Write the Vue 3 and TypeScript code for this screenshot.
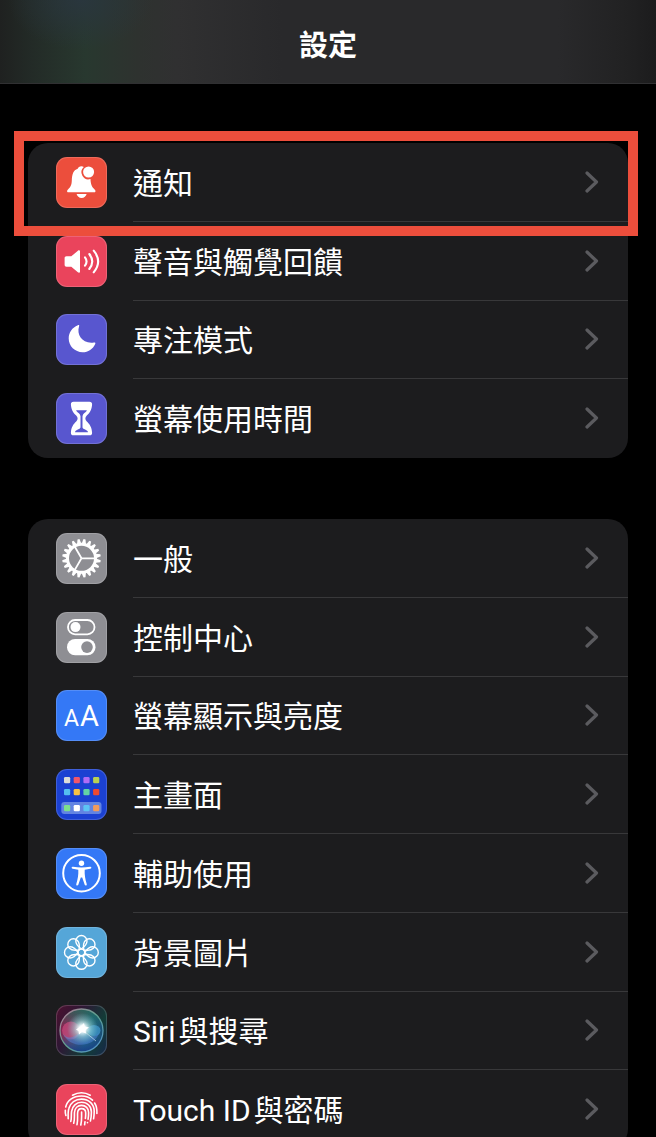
<script setup lang="ts">
type IconName =
  | 'bell' | 'sound' | 'moon' | 'hourglass' | 'gear' | 'toggles'
  | 'display' | 'home' | 'access' | 'wallpaper' | 'siri' | 'touch'

interface Row {
  id: string
  icon: IconName
  latin?: string
  label: string
  marked?: boolean
}

const groups: Row[][] = [
  [
    { id: 'notifications', icon: 'bell', label: '通知', marked: true },
    { id: 'sounds', icon: 'sound', label: '聲音與觸覺回饋' },
    { id: 'focus', icon: 'moon', label: '專注模式' },
    { id: 'screen-time', icon: 'hourglass', label: '螢幕使用時間' },
  ],
  [
    { id: 'general', icon: 'gear', label: '一般' },
    { id: 'control-center', icon: 'toggles', label: '控制中心' },
    { id: 'display', icon: 'display', label: '螢幕顯示與亮度' },
    { id: 'home-screen', icon: 'home', label: '主畫面' },
    { id: 'accessibility', icon: 'access', label: '輔助使用' },
    { id: 'wallpaper', icon: 'wallpaper', label: '背景圖片' },
    { id: 'siri', icon: 'siri', latin: 'Siri', label: '與搜尋' },
    { id: 'touch-id', icon: 'touch', latin: 'Touch ID', label: '與密碼' },
  ],
]

const teeth = Array.from({ length: 20 }, (_, i) => i * 18 + 9)
const petals = Array.from({ length: 8 }, (_, i) => i * 45)

const apps = [
  { y: 8, colors: ['#dcdcd8', '#f0566b', '#b06cf5', '#b9d153'] },
  { y: 20, colors: ['#55bff0', '#f7c244', '#63d3a5', '#f0492f'] },
  { y: 36, colors: ['#7de08b', '#ffffff', '#5cc4f5', '#f29b5c'] },
].flatMap((line) => line.colors.map((fill, i) => ({ x: 8 + i * 9.7, y: line.y, fill })))
</script>

<template>
  <div class="screen">
    <header class="bar">
      <h1>設定</h1>
    </header>
    <main>
      <ul v-for="(rows, g) in groups" :key="g" class="group">
        <li v-for="row in rows" :key="row.id" :class="{ marked: row.marked }">
          <a class="row" :href="'#' + row.id">
            <span class="tile" :class="row.icon">
              <svg viewBox="0 0 51 51" aria-hidden="true">
                <g v-if="row.icon === 'bell'" fill="#fff">
                  <path d="M11.6 35.3c-1-.9-.4-2.200.6-3.100 2.600-2.500 3.400-4.200 3.600-8.700.3-6.300 1.400-10.300 5.900-11.800.5-1.500 1.900-2.400 3.600-2.400 1 0 1.900.3 2.500.8a7 7 0 0 0 6.700 11.900c.2 5.600 1.400 7.800 3.900 10.200 1 .9 1.600 2.200.6 3.100Z" />
                  <circle cx="32.600" cy="15" r="5.500" />
                  <path d="M20.600 37h10c-.5 2.400-2.500 3.900-5 3.900s-4.500-1.500-5-3.900Z" />
                </g>

                <g v-else-if="row.icon === 'sound'">
                  <path d="M10.500 20.300h4.800l6.600-5.600c1-.8 2.100-.4 2.100.9v19.800c0 1.300-1.100 1.700-2.100.9l-6.600-5.600h-4.800c-1.200 0-1.900-.7-1.900-1.900v-6.600c0-1.200.7-1.900 1.900-1.900Z" fill="#fff" />
                  <path d="M29 21.300q3.100 4.200 0 8.400M33.300 18q5.900 7.500 0 15M37.700 14.700q8.900 10.800 0 21.600" fill="none" stroke="#fff" stroke-width="2.100" stroke-linecap="round" />
                </g>

                <path v-else-if="row.icon === 'moon'" d="M21.900 11.300c.9-.5 1.600 0 1.200 1-2.900 8.600 3.600 18 14.900 16.200 1.300-.2 1.700.4 1.200 1.400C37 35 32.200 38.200 26.600 38.200c-7.700 0-13.900-6.200-13.900-13.700 0-5.800 3.500-11 9.200-13.200Z" fill="#fff" />

                <g v-else-if="row.icon === 'hourglass'">
                  <path d="M17.500 8.700h16c1.700 0 2.700 1 2.600 2.600-.3 5.500-2.300 8.500-5.300 11.300-1.900 1.800-1.900 4 0 5.800 3 2.800 5 5.800 5.300 11.300.1 1.600-.9 2.600-2.600 2.600h-16c-1.700 0-2.700-1-2.600-2.600.3-5.500 2.300-8.500 5.300-11.300 1.900-1.800 1.900-4 0-5.800-3-2.800-5-5.800-5.300-11.300-.1-1.600.9-2.600 2.600-2.600Z" fill="#fff" />
                  <path d="M20.700 17.200h9.600c.5 0 .6.500.3.900-1.400 1.800-3.900 2.700-4.100 5.200v11c.2 2 3.900 2.200 5.300 4.100.4.500 0 .9-.6.900H19.800c-.6 0-1-.4-.6-.9 1.400-1.900 5.100-2.100 5.300-4.100v-11c-.2-2.500-2.700-3.400-4.100-5.200-.3-.4-.2-.9.300-.9Z" fill="#5856cf" />
                </g>

                <g v-else-if="row.icon === 'gear'" transform="translate(25.500 25.300)" fill="none" stroke="#fff">
                  <circle r="14" stroke-width="3" />
                  <path v-for="a in teeth" :key="a" d="M14.500-2.200 19.300-1V1L14.500 2.200Z" :transform="`rotate(${a})`" fill="#fff" stroke="none" />
                  <path d="M0 0H14M0 0-7-12.100M0 0-7 12.100" stroke-width="1.800" />
                </g>

                <g v-else-if="row.icon === 'toggles'">
                  <rect x="12" y="8" width="26.500" height="14.300" rx="7.100" fill="none" stroke="#fff" stroke-width="1.800" />
                  <circle cx="19.500" cy="15.100" r="5" fill="#fff" />
                  <rect x="11" y="27" width="28.500" height="16.300" rx="8.100" fill="#fff" />
                  <circle cx="31" cy="35.100" r="5.800" fill="#8e8e93" />
                </g>

                <g v-else-if="row.icon === 'display'" class="letters">
                  <text x="15.500" y="36" font-size="23">A</text>
                  <text x="33.500" y="36" font-size="29">A</text>
                </g>

                <g v-else-if="row.icon === 'home'">
                  <rect x="5.300" y="33" width="40.200" height="12" rx="3" fill="#6284e2" />
                  <rect v-for="(app, i) in apps" :key="i" :x="app.x" :y="app.y" width="6.200" height="6.200" rx="1.300" :fill="app.fill" />
                </g>

                <g v-else-if="row.icon === 'access'">
                  <circle cx="25.500" cy="25.200" r="18.300" fill="none" stroke="#fff" stroke-width="2" />
                  <circle cx="25.500" cy="15.200" r="2.700" fill="#fff" />
                  <path d="M17 18.700q8.500 1.500 17 0c1.600-.3 1.900 1.700.4 2l-5.700 1.100c-.3 5 .6 9.600 2 14.100.5 1.600-1.400 2.200-2 .8l-2.500-7.200h-1.400l-2.500 7.200c-.6 1.400-2.500.8-2-.8 1.400-4.500 2.300-9.100 2-14.100l-5.700-1.100c-1.500-.3-1.200-2.300.4-2Z" fill="#fff" />
                </g>

                <g v-else-if="row.icon === 'wallpaper'" transform="translate(25.400 25.400)" fill="none" stroke="#fff" stroke-width="1.400">
                  <path v-for="a in petals" :key="a" d="M0-3.400C-4-6.200-5.600-8.600-5.600-11.300a5.600 5.600 0 0 1 11.200 0C5.600-8.600 4-6.200 0-3.400Z" :transform="`rotate(${a})`" />
                  <circle r="3.300" />
                </g>

                <g v-else-if="row.icon === 'siri'">
                  <defs>
                    <radialGradient id="siri-glow">
                      <stop offset="0" stop-color="#fff" />
                      <stop offset=".22" stop-color="#f4feff" stop-opacity=".95" />
                      <stop offset=".55" stop-color="#a6e0e0" stop-opacity=".5" />
                      <stop offset="1" stop-color="#7fc8d0" stop-opacity="0" />
                    </radialGradient>
                    <linearGradient id="siri-orb" x1="0" y1=".35" x2="1" y2=".65">
                      <stop offset="0" stop-color="#8b1c4c" />
                      <stop offset=".4" stop-color="#57586f" />
                      <stop offset=".65" stop-color="#256e80" />
                      <stop offset="1" stop-color="#174a75" />
                    </linearGradient>
                    <linearGradient id="siri-ring" x1="0" y1="0" x2="1" y2="1">
                      <stop offset="0" stop-color="#b77b97" />
                      <stop offset=".5" stop-color="#5fa08f" />
                      <stop offset="1" stop-color="#4f8fd0" />
                    </linearGradient>
                    <linearGradient id="siri-shade" x1="0" y1="0" x2="0" y2="1">
                      <stop offset="0" stop-color="#1d6553" stop-opacity=".75" />
                      <stop offset=".4" stop-color="#1d6553" stop-opacity="0" />
                      <stop offset=".65" stop-color="#183f9c" stop-opacity="0" />
                      <stop offset="1" stop-color="#173b88" stop-opacity=".9" />
                    </linearGradient>
                  </defs>
                  <circle cx="25.500" cy="25.500" r="21.500" fill="url(#siri-orb)" />
                  <circle cx="25.500" cy="25.500" r="21.500" fill="url(#siri-shade)" stroke="url(#siri-ring)" stroke-width="1.300" />
                  <ellipse cx="15" cy="25.500" rx="9" ry="9" fill="#dd4f83" fill-opacity=".6" />
                  <ellipse cx="38" cy="25.500" rx="6.500" ry="5.500" fill="#439fd5" fill-opacity=".65" />
                  <path d="M7 29c7 8 14 0 20-3 6 6 11 7 16 2-4 14-28 17-36 1Z" fill="#5084db" fill-opacity=".5" />
                  <circle cx="26.500" cy="23.500" r="15.500" fill="url(#siri-glow)" />
                  <path d="M26 24.500 40 36" stroke="#d8ecff" stroke-opacity=".6" stroke-width="1" />
                  <path d="M20 24.500l5-3.500 3-3 .8 3.500 4.200 1-3.500 2.500.5 3.500-4-1.500-3 2.500-.5-3.500Z" fill="#fff" />
                </g>

                <g v-else fill="none" stroke="#fff" stroke-width="1.600" stroke-linecap="round">
                  <path d="M16.500 11.200q9-5 17.800 0" />
                  <path d="M9.700 23c1.300-6.500 7.300-11 15.800-11 4.800 0 8.200 1.500 11 4.200" />
                  <path d="M38.600 19c2 3 2.500 6.500 2.300 10.500M9.300 26.300q-.2 2.700.6 5.200" />
                  <path d="M12.200 34.800c-.2-4-.2-7.700.7-10.500 1.600-5.500 6.500-9.200 12.600-9.200 7.700 0 12.700 5.400 12.700 12.200 0 2.700-.1 5-.6 7.500" />
                  <path d="M14.800 37.400c1-3.800.2-7 .8-10.100.7-5.300 4.700-9 9.900-9 5.800 0 9.900 4 9.900 9.600 0 3.200-.3 6-1 9.100" />
                  <path d="M17.700 39.300c1.200-4 .5-7.600.8-11 .3-4.200 3.100-6.900 7-6.900 4.200 0 7.100 3 7.100 7.100 0 2.500-.1 4.500-.5 6.700M31.500 38.500v.2" />
                  <path d="M21 40.600c1-4 .4-7.900.6-11.600.1-2.700 1.600-4.400 3.900-4.400 2.500 0 4.200 1.700 4.200 4.500 0 1.900 0 3.600-.3 5.300" />
                  <path d="M25.600 28v4.500q.1 4.300-.8 8.500M29 37.700l-.4 3.100" />
                </g>
              </svg>
            </span>
            <span class="label">
              <span class="text"><span v-if="row.latin" class="latin">{{ row.latin }}</span>{{ row.label }}</span>
              <svg class="chevron" viewBox="0 0 14 22" aria-hidden="true">
                <path d="M2 2l9.500 9L2 20" fill="none" stroke="#5b5b5f" stroke-width="3.200" stroke-linecap="round" stroke-linejoin="round" />
              </svg>
            </span>
          </a>
        </li>
      </ul>
    </main>
  </div>
</template>

<style>
html,
body {
  margin: 0;
  background: #000;
}
</style>

<style scoped>
.screen {
  height: 100vh;
  overflow: hidden;
  background: #000;
  color: #fff;
  font-family: Roboto, "Noto Sans CJK TC", sans-serif;
}

.bar {
  display: flex;
  align-items: center;
  justify-content: center;
  box-sizing: border-box;
  height: 84px;
  padding-top: 8px;
  border-bottom: 1px solid #303032;
  background:
    radial-gradient(ellipse 72px 50px at 80px 0, rgba(42, 54, 64, 0.85), transparent),
    linear-gradient(90deg, #1f2120 0, #232b27 5%, #28382f 13%, #2e322f 21%, #303031 27%, #29292b 43%, #29292b 85%, #222223 95%, #1c1c1d 100%);
}

h1 {
  margin: 0;
  font-size: 29px;
  line-height: 40px;
  font-weight: 700;
}

main {
  display: grid;
  gap: 61px;
  padding: 59px 28px 0;
}

.group {
  display: grid;
  grid-auto-rows: 1fr;
  margin: 0;
  padding: 0;
  list-style: none;
  border-radius: 20px;
  background: #1c1c1e;
}

.group:first-child {
  min-height: 315px;
}

.group:last-child {
  min-height: 630px;
}

li {
  display: grid;
}

.marked {
  position: relative;
}

.marked::after {
  content: "";
  position: absolute;
  inset: -12px -10px -14px -14px;
  border: 10px solid #ec4e3c;
  pointer-events: none;
}

.row {
  display: flex;
  align-items: stretch;
  gap: 26px;
  padding-left: 28px;
  color: inherit;
  text-decoration: none;
}

.tile {
  align-self: center;
  flex: none;
  box-sizing: border-box;
  width: 51px;
  height: 51px;
  border-radius: 11px;
  overflow: hidden;
  box-shadow: inset 0 0 0 1px rgba(255, 255, 255, 0.16);
}

.tile svg {
  display: block;
  width: 100%;
  height: 100%;
}

.bell { background: #ec4e3c; }
.sound, .touch { background: #ea445c; }
.moon, .hourglass { background: #5856cf; }
.gear, .toggles { background: #8e8e93; }
.display, .access { background: #3478f6; }
.home { background: #1b41d2; }
.wallpaper { background: #55a6d8; }
.siri { background: linear-gradient(120deg, #4d102f 0, #2e1734 35%, #123d38 70%, #17264a 100%); }

.letters {
  fill: #fff;
  font-family: Roboto, sans-serif;
  text-anchor: middle;
}

.label {
  display: flex;
  flex: 1;
  align-items: center;
  justify-content: space-between;
  padding-right: 29px;
  border-bottom: 1px solid #38383a;
}

li:last-child .label {
  border-bottom-color: transparent;
}

.text {
  padding-top: 4px;
  font-size: 30px;
  line-height: 44px;
  white-space: nowrap;
}

.latin {
  margin-right: 3px;
}

.chevron {
  flex: none;
  width: 14px;
  height: 22px;
}
</style>
